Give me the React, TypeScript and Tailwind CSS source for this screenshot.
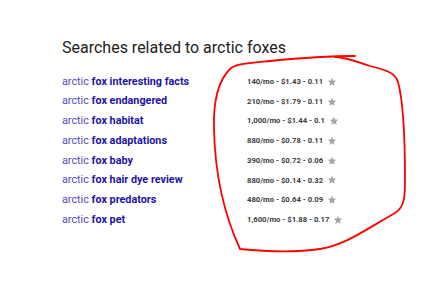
const rows = [
  { term: "interesting facts", stats: "140/mo - $1.43 - 0.11" },
  { term: "endangered", stats: "210/mo - $1.79 - 0.11" },
  { term: "habitat", stats: "1,000/mo - $1.44 - 0.1" },
  { term: "adaptations", stats: "880/mo - $0.78 - 0.11" },
  { term: "baby", stats: "390/mo - $0.72 - 0.06" },
  { term: "hair dye review", stats: "880/mo - $0.14 - 0.32" },
  { term: "predators", stats: "480/mo - $0.64 - 0.09" },
  { term: "pet", stats: "1,600/mo - $1.88 - 0.17" },
];

function Star() {
  return (
    <svg width="10" height="10" viewBox="0 0 24 24" className="ml-[4px] shrink-0">
      <path
        d="M12 2l3 6.4 7 .8-5.2 4.8 1.5 6.9L12 17.4l-6.3 3.5 1.5-6.9L2 9.2l7-.8z"
        fill="#a6a6a6"
      />
    </svg>
  );
}

export default function App() {
  return (
    <div className="relative w-[448px] h-[294px] bg-white overflow-hidden font-['Roboto',sans-serif]">
      <div className="pl-[62px] pt-[38px]">
        {/* heading */}
        <h2 className="text-[16px] leading-[20px] text-[#222]">
          Searches related to arctic foxes
        </h2>

        {/* related searches */}
        <div className="mt-[14px] flex flex-col">
          {rows.map((row, i) => (
            <div key={i} className="flex items-center h-[19.7px]">
              <div className="w-[185px] text-[10.8px] text-[#1f12a6] whitespace-nowrap">
                <span className="text-[#5548b8]">arctic </span>
                <span className="font-bold">fox {row.term}</span>
              </div>
              <div className="flex items-center text-[7.7px] font-bold text-[#3c3c3c]">
                {row.stats}
                <Star />
              </div>
            </div>
          ))}
        </div>
      </div>

      {/* hand drawn marker */}
      <svg className="absolute inset-0 pointer-events-none" width="448" height="294">
        <path
          d="M 355 56 C 330 56, 300 58, 270 61 C 250 63, 237 64, 231 68 C 218 80, 213 100, 214 130 C 215 170, 222 210, 240 249 C 270 252, 300 252, 320 249 C 345 245, 365 230, 395 213 C 405 207, 405 195, 405 180 C 405 140, 403 100, 398 82 C 395 72, 385 70, 370 66 C 355 61, 345 57, 335 57"
          fill="none"
          stroke="#f00"
          strokeWidth="1.8"
          strokeLinecap="round"
        />
      </svg>
    </div>
  );
}
